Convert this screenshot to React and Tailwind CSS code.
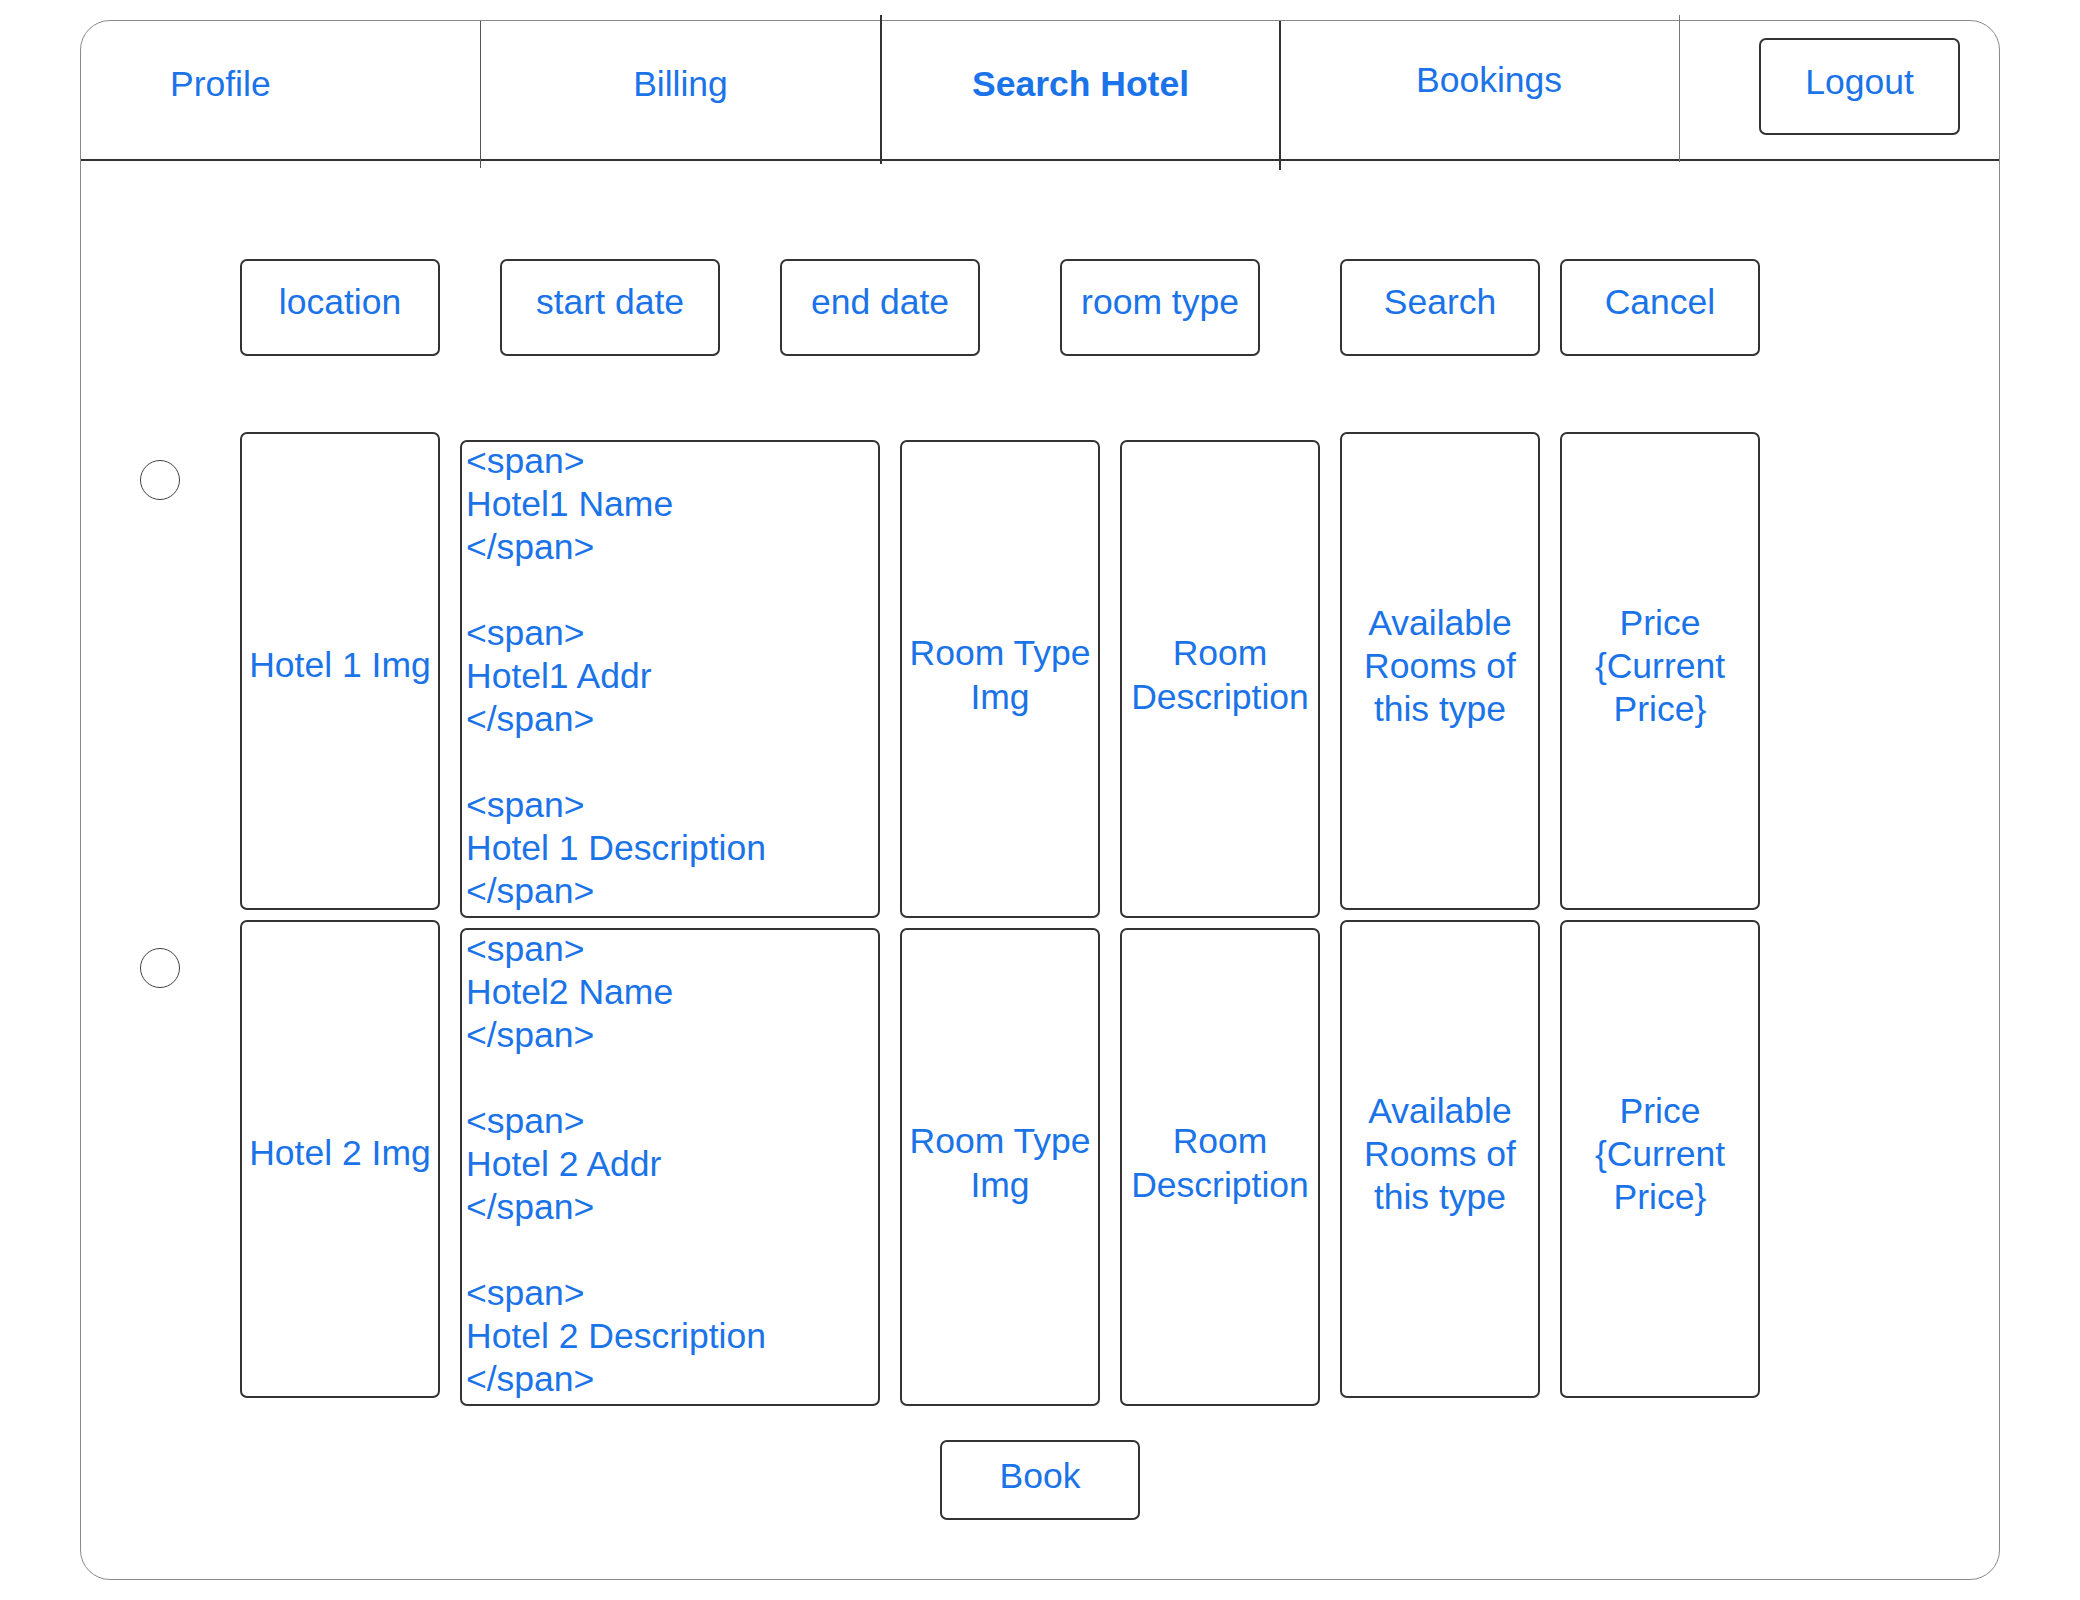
import React from "react";

const font = { fontFamily: '"Liberation Sans", Arial, sans-serif' };

function Box({ className = "", children }) {
  return (
    <div className={`flex shrink-0 items-center justify-center rounded-[7px] border-2 border-[#333333] bg-white text-center ${className}`}>
      {children}
    </div>
  );
}

function Divider({ className }) {
  return <div className={`shrink-0 self-stretch ${className}`} />;
}

function HotelRow({ n, name, addr }) {
  const lines = [
    "<span>",
    name,
    "</span>",
    "",
    "<span>",
    addr,
    "</span>",
    "",
    "<span>",
    `Hotel ${n} Description`,
    "</span>",
  ];

  return (
    <div className="flex h-[488px] items-start">
      <div className="ml-[59px] mt-[28px] h-[40px] w-[40px] shrink-0 rounded-full border border-[#444444]" />
      <Box className="ml-[60px] h-[478px] w-[200px] pb-[10px]">Hotel {n} Img</Box>
      <div className="ml-[20px] mt-[8px] h-[478px] w-[420px] shrink-0 rounded-[7px] border-2 border-[#333333] pl-[4px] leading-[43px]">
        <div className="-mt-[2px]">
          {lines.map((line, i) => (
            <div key={i} className="h-[43px] whitespace-pre">
              {line}
            </div>
          ))}
        </div>
      </div>
      <Box className="ml-[20px] mt-[8px] h-[478px] w-[200px] pb-[8px] leading-[44px]">
        <span>
          Room Type
          <br />
          Img
        </span>
      </Box>
      <Box className="ml-[20px] mt-[8px] h-[478px] w-[200px] pb-[8px] leading-[44px]">
        <span>
          Room
          <br />
          Description
        </span>
      </Box>
      <Box className="ml-[20px] h-[478px] w-[200px] pb-[10px] leading-[43px]">
        <span>
          Available
          <br />
          Rooms of
          <br />
          this type
        </span>
      </Box>
      <Box className="ml-[20px] h-[478px] w-[200px] pb-[10px] leading-[43px]">
        <span>
          Price
          <br />
          {"{Current"}
          <br />
          {"Price}"}
        </span>
      </Box>
    </div>
  );
}

export default function App() {
  return (
    <div className="min-h-screen bg-white pl-[80px] pt-[20px] text-[35.5px] text-[#1a73e8]" style={font}>
      <div className="flex h-[1560px] w-[1920px] flex-col rounded-[30px] border border-[#8a8a8a]">
        {/* tabs */}
        <div className="flex h-[140px] shrink-0 border-b-2 border-[#333333]">
          <div className="flex w-[399px] shrink-0 items-center pb-[10px] pl-[89px]">Profile</div>
          <Divider className="-mb-[9px] w-px bg-[#555555]" />
          <div className="flex w-[399px] shrink-0 items-center justify-center pb-[10px]">Billing</div>
          <Divider className="-mb-[5px] -mt-[6px] w-[2px] bg-[#333333]" />
          <div className="flex w-[397px] shrink-0 items-center justify-center pb-[10px] font-bold">Search Hotel</div>
          <Divider className="-mb-[11px] w-[2px] bg-[#333333]" />
          <div className="flex w-[398px] shrink-0 items-center justify-center pb-[18px] pl-[18px]">Bookings</div>
          <Divider className="-mb-[3px] -mt-[6px] w-px bg-[#777777]" />
          <div className="flex flex-1 items-start pt-[17px]">
            <Box className="ml-[79px] h-[97px] w-[201px] pb-[8px]">Logout</Box>
          </div>
        </div>

        {/* search bar */}
        <div className="mt-[98px] flex">
          <Box className="ml-[159px] h-[97px] w-[200px] pb-[9px]">location</Box>
          <Box className="ml-[60px] h-[97px] w-[220px] pb-[9px]">start date</Box>
          <Box className="ml-[60px] h-[97px] w-[200px] pb-[9px]">end date</Box>
          <Box className="ml-[80px] h-[97px] w-[200px] pb-[9px]">room type</Box>
          <Box className="ml-[80px] h-[97px] w-[200px] pb-[9px]">Search</Box>
          <Box className="ml-[20px] h-[97px] w-[200px] pb-[9px]">Cancel</Box>
        </div>

        {/* results */}
        <div className="mt-[76px] flex flex-col">
          <HotelRow n={1} name="Hotel1 Name" addr="Hotel1 Addr" />
          <HotelRow n={2} name="Hotel2 Name" addr="Hotel 2 Addr" />
        </div>

        <div className="mt-[32px] flex">
          <Box className="ml-[859px] h-[80px] w-[200px] pb-[6px]">Book</Box>
        </div>
      </div>
    </div>
  );
}
